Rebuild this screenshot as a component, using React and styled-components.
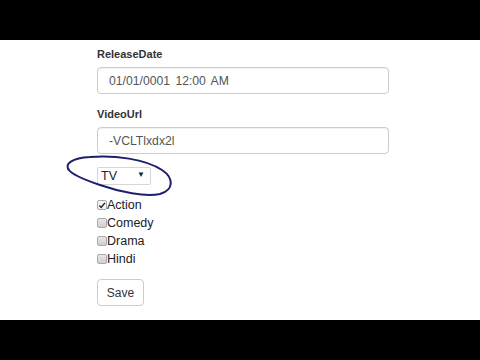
import React from "react";
import styled, { createGlobalStyle } from "styled-components";

const Global = createGlobalStyle`
  html, body { margin: 0; padding: 0; background: #000; }
  body { font-family: "Liberation Sans", Arial, sans-serif; }
`;

const Page = styled.div`
  width: 480px;
  height: 360px;
  display: flex;
  flex-direction: column;
  background: #000;
`;

const Bar = styled.div`
  height: 40px;
  flex: none;
  background: #000;
`;

const Main = styled.div`
  position: relative;
  flex: 1;
  background: #fff;
  padding: 6px 0 0 97px;
  display: flex;
  flex-direction: column;
  align-items: flex-start;
  overflow: hidden;
`;

const Group = styled.div`
  display: flex;
  flex-direction: column;
  margin-bottom: 12px;
`;

const Label = styled.label`
  font-size: 11px;
  line-height: 16px;
  font-weight: bold;
  color: #333;
  margin-bottom: 5px;
`;

const TextInput = styled.input`
  box-sizing: border-box;
  width: 292px;
  height: 27px;
  padding: 0 11px;
  border: 1px solid #ccc;
  border-radius: 4px;
  box-shadow: inset 0 1px 1px rgba(0, 0, 0, 0.06);
  font-family: "Liberation Sans", Arial, sans-serif;
  font-size: 12.2px;
  word-spacing: 2px;
  color: #555;
  outline: none;
  background: #fff;
`;

const SelectWrap = styled.div`
  position: relative;
  width: 54px;
  height: 18px;
  margin-bottom: 12px;
`;

const Select = styled.select`
  box-sizing: border-box;
  width: 100%;
  height: 100%;
  appearance: none;
  -webkit-appearance: none;
  border: 1px solid #d6d6d6;
  border-radius: 2px;
  background: #fff;
  padding: 0 0 0 3px;
  font-family: "Liberation Sans", Arial, sans-serif;
  font-size: 12.5px;
  color: #222;
  outline: none;
`;

const Arrow = styled.span`
  position: absolute;
  right: 6px;
  top: 5px;
  font-size: 8px;
  line-height: 8px;
  color: #222;
  pointer-events: none;
`;

const CheckRow = styled.label`
  display: flex;
  align-items: center;
  height: 18px;
  font-size: 12.5px;
  color: #222;
`;

const Box = styled.span`
  box-sizing: border-box;
  width: 10px;
  height: 10px;
  border: 1px solid #aaa;
  border-radius: 2px;
  background: ${(p) => (p.$checked ? "#f4f4f4" : "linear-gradient(#e6e6e6, #cfcfcf)")};
  display: flex;
  align-items: center;
  justify-content: center;
`;

const Checks = styled.div`
  display: flex;
  flex-direction: column;
  margin-bottom: 11px;
`;

const Button = styled.button`
  box-sizing: border-box;
  width: 47px;
  height: 27px;
  border: 1px solid #ccc;
  border-radius: 4px;
  background: #fff;
  font-family: "Liberation Sans", Arial, sans-serif;
  font-size: 12px;
  color: #333;
  padding: 0;
`;

const Scribble = styled.svg`
  position: absolute;
  left: 60px;
  top: 110px;
  width: 120px;
  height: 50px;
  overflow: visible;
  pointer-events: none;
`;

function Check({ label, checked }) {
  return (
    <CheckRow>
      <Box $checked={checked}>
        {checked && (
          <svg width="9" height="9" viewBox="0 0 9 9">
            <path d="M1.5 4.6 L3.6 6.8 L7.8 1.6" fill="none" stroke="#222" strokeWidth="1.6" />
          </svg>
        )}
      </Box>
      {label}
    </CheckRow>
  );
}

export default function App() {
  return (
    <>
      <Global />
      <Page>
        <Bar />
        <Main>
          <Group>
            <Label>ReleaseDate</Label>
            <TextInput defaultValue="01/01/0001 12:00 AM" />
          </Group>
          <Group>
            <Label>VideoUrl</Label>
            <TextInput defaultValue="-VCLTlxdx2l" />
          </Group>
          <SelectWrap>
            <Select defaultValue="TV">
              <option>TV</option>
              <option>Movie</option>
            </Select>
            <Arrow>▼</Arrow>
          </SelectWrap>
          <Checks>
            <Check label="Action" checked />
            <Check label="Comedy" />
            <Check label="Drama" />
            <Check label="Hindi" />
          </Checks>
          <Button>Save</Button>
          <Scribble viewBox="0 0 120 50">
            <path
              d="M9 20 C4 14, 12 8, 30 7 C55 5, 85 9, 102 20 C114 28, 114 40, 100 44 C85 47, 60 42, 40 35 C25 30, 12 25, 8 19"
              fill="none"
              stroke="#1d1f6e"
              strokeWidth="2"
              strokeLinecap="round"
            />
          </Scribble>
        </Main>
        <Bar />
      </Page>
    </>
  );
}
